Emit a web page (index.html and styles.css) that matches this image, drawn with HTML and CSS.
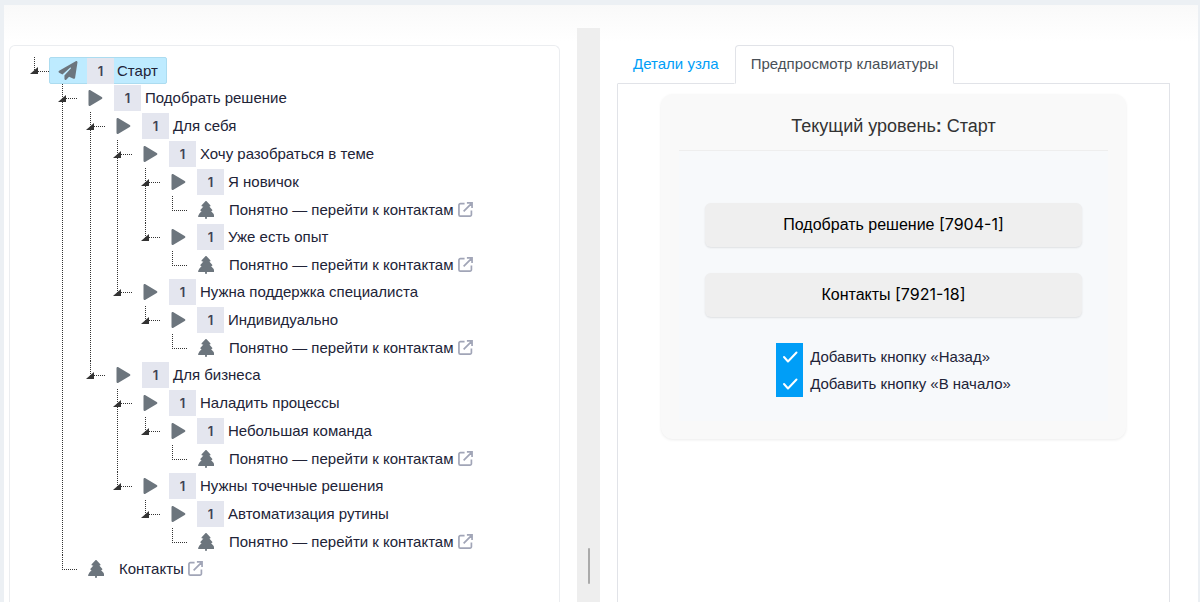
FILE: index.html
```
<!DOCTYPE html>
<html lang="ru">
<head>
<meta charset="utf-8">
<meta name="viewport" content="width=device-width, initial-scale=1">
<title>Сценарий бота</title>
<link rel="stylesheet" href="styles.css">
</head>
<body>
<svg class="sprite" aria-hidden="true">
  <symbol id="i-toggle" viewBox="0 0 8 7"><path d="M8 0v7H0z"/></symbol>
  <symbol id="i-plane" viewBox="0 0 512 512"><path d="M498.100 5.600c10.100 7 15.400 19.100 13.500 31.200l-64 416c-1.500 9.700-7.400 18.200-16 23s-18.900 5.400-28 1.600L284 427.700l-68.500 74.100c-8.900 9.700-22.900 12.900-35.200 8.100S160 493.200 160 480V396.400c0-4 1.500-7.800 4.200-10.700L331.800 202.800c5.800-6.300 5.600-16-.4-22s-15.700-6.400-22-.7L106 360.800 17.700 316.600C7.100 311.300 .3 300.700 0 288.900s5.900-22.800 16.100-28.700l448-256c10.700-6.100 23.900-5.500 34 1.400z"/></symbol>
  <symbol id="i-play" viewBox="0 0 14 16"><path d="M0 1.300C0 .3 1 -.3 1.900 .2L13.200 6.900c.9.500.9 1.700 0 2.200L1.900 15.800C1 16.300 0 15.700 0 14.700z"/></symbol>
  <symbol id="i-tree" viewBox="0 0 448 512"><path d="M207 8c9-11 25-11 34 0l106 112c13 14 4 36-15 36h-14l82 92c12 14 3 38-16 38h-18l76 86c6 7 8 14 2 22l22 24c12 14 2 34-16 34H250v30c0 18-11 30-26 30s-26-12-26-30v-30H18c-18 0-28-20-16-34l22-24c-6-8-4-15 2-22l76-86H84c-19 0-28-24-16-38l82-92h-34c-19 0-28-22-15-36z"/></symbol>
  <symbol id="i-ext" viewBox="0 0 16 16"><path d="M7 1.700H2.500a1.500 1.500 0 0 0-1.500 1.500v10.300A1.500 1.500 0 0 0 2.500 15h10.300a1.500 1.500 0 0 0 1.500-1.500V9M6 10l8-8M9.500 1H15v5.500" fill="none" stroke="currentColor" stroke-width="1.800"/></symbol>
</svg>

<main class="page">
  <section class="pane pane--tree">
    <div class="tree-card">
      <ul class="tree">
        <li class="node">
          <div class="row"><button class="toggle" aria-label="Свернуть"><svg><use href="#i-toggle"/></svg></button><a class="link link--selected" href="#"><svg class="icon icon--plane"><use href="#i-plane"/></svg><span class="badge">1</span>Старт</a></div>
          <ul class="branch">
            <li class="node">
              <div class="row"><button class="toggle" aria-label="Свернуть"><svg><use href="#i-toggle"/></svg></button><a class="link" href="#"><svg class="icon icon--play"><use href="#i-play"/></svg><span class="badge">1</span>Подобрать решение</a></div>
              <ul class="branch">
                <li class="node">
                  <div class="row"><button class="toggle" aria-label="Свернуть"><svg><use href="#i-toggle"/></svg></button><a class="link" href="#"><svg class="icon icon--play"><use href="#i-play"/></svg><span class="badge">1</span>Для себя</a></div>
                  <ul class="branch branch--tight">
                    <li class="node">
                      <div class="row"><button class="toggle" aria-label="Свернуть"><svg><use href="#i-toggle"/></svg></button><a class="link" href="#"><svg class="icon icon--play"><use href="#i-play"/></svg><span class="badge">1</span>Хочу разобраться в теме</a></div>
                      <ul class="branch">
                        <li class="node">
                          <div class="row"><button class="toggle" aria-label="Свернуть"><svg><use href="#i-toggle"/></svg></button><a class="link" href="#"><svg class="icon icon--play"><use href="#i-play"/></svg><span class="badge">1</span>Я новичок</a></div>
                          <ul class="branch branch--tight">
                            <li class="node"><div class="row row--leaf"><span class="elbow"></span><a class="link link--leaf" href="#"><svg class="icon icon--tree"><use href="#i-tree"/></svg>Понятно — перейти к контактам<svg class="ext"><use href="#i-ext"/></svg></a></div></li>
                          </ul>
                        </li>
                        <li class="node">
                          <div class="row"><button class="toggle" aria-label="Свернуть"><svg><use href="#i-toggle"/></svg></button><a class="link" href="#"><svg class="icon icon--play"><use href="#i-play"/></svg><span class="badge">1</span>Уже есть опыт</a></div>
                          <ul class="branch branch--tight">
                            <li class="node"><div class="row row--leaf"><span class="elbow"></span><a class="link link--leaf" href="#"><svg class="icon icon--tree"><use href="#i-tree"/></svg>Понятно — перейти к контактам<svg class="ext"><use href="#i-ext"/></svg></a></div></li>
                          </ul>
                        </li>
                      </ul>
                    </li>
                    <li class="node">
                      <div class="row"><button class="toggle" aria-label="Свернуть"><svg><use href="#i-toggle"/></svg></button><a class="link" href="#"><svg class="icon icon--play"><use href="#i-play"/></svg><span class="badge">1</span>Нужна поддержка специалиста</a></div>
                      <ul class="branch">
                        <li class="node">
                          <div class="row"><button class="toggle" aria-label="Свернуть"><svg><use href="#i-toggle"/></svg></button><a class="link" href="#"><svg class="icon icon--play"><use href="#i-play"/></svg><span class="badge">1</span>Индивидуально</a></div>
                          <ul class="branch branch--tight">
                            <li class="node"><div class="row row--leaf"><span class="elbow"></span><a class="link link--leaf" href="#"><svg class="icon icon--tree"><use href="#i-tree"/></svg>Понятно — перейти к контактам<svg class="ext"><use href="#i-ext"/></svg></a></div></li>
                          </ul>
                        </li>
                      </ul>
                    </li>
                  </ul>
                </li>
                <li class="node">
                  <div class="row"><button class="toggle" aria-label="Свернуть"><svg><use href="#i-toggle"/></svg></button><a class="link" href="#"><svg class="icon icon--play"><use href="#i-play"/></svg><span class="badge">1</span>Для бизнеса</a></div>
                  <ul class="branch branch--tight">
                    <li class="node">
                      <div class="row"><button class="toggle" aria-label="Свернуть"><svg><use href="#i-toggle"/></svg></button><a class="link" href="#"><svg class="icon icon--play"><use href="#i-play"/></svg><span class="badge">1</span>Наладить процессы</a></div>
                      <ul class="branch">
                        <li class="node">
                          <div class="row"><button class="toggle" aria-label="Свернуть"><svg><use href="#i-toggle"/></svg></button><a class="link" href="#"><svg class="icon icon--play"><use href="#i-play"/></svg><span class="badge">1</span>Небольшая команда</a></div>
                          <ul class="branch branch--tight">
                            <li class="node"><div class="row row--leaf"><span class="elbow"></span><a class="link link--leaf" href="#"><svg class="icon icon--tree"><use href="#i-tree"/></svg>Понятно — перейти к контактам<svg class="ext"><use href="#i-ext"/></svg></a></div></li>
                          </ul>
                        </li>
                      </ul>
                    </li>
                    <li class="node">
                      <div class="row"><button class="toggle" aria-label="Свернуть"><svg><use href="#i-toggle"/></svg></button><a class="link" href="#"><svg class="icon icon--play"><use href="#i-play"/></svg><span class="badge">1</span>Нужны точечные решения</a></div>
                      <ul class="branch">
                        <li class="node">
                          <div class="row"><button class="toggle" aria-label="Свернуть"><svg><use href="#i-toggle"/></svg></button><a class="link" href="#"><svg class="icon icon--play"><use href="#i-play"/></svg><span class="badge">1</span>Автоматизация рутины</a></div>
                          <ul class="branch branch--tight">
                            <li class="node"><div class="row row--leaf"><span class="elbow"></span><a class="link link--leaf" href="#"><svg class="icon icon--tree"><use href="#i-tree"/></svg>Понятно — перейти к контактам<svg class="ext"><use href="#i-ext"/></svg></a></div></li>
                          </ul>
                        </li>
                      </ul>
                    </li>
                  </ul>
                </li>
              </ul>
            </li>
            <li class="node"><div class="row row--leaf"><span class="elbow"></span><a class="link link--leaf" href="#"><svg class="icon icon--tree"><use href="#i-tree"/></svg>Контакты<svg class="ext"><use href="#i-ext"/></svg></a></div></li>
          </ul>
        </li>
      </ul>
    </div>
  </section>

  <div class="gutter"><span class="grip"></span></div>

  <section class="pane pane--details">
    <nav class="tabs">
      <a class="tab" href="#">Детали узла</a>
      <a class="tab tab--active" href="#">Предпросмотр клавиатуры</a>
    </nav>
    <div class="tab-body">
      <div class="preview">
        <h1 class="preview-title">Текущий уровень<b>:</b> Старт</h1>
        <div class="keys">
          <button class="key">Подобрать решение <span class="code">[7904-1]</span></button>
          <button class="key">Контакты <span class="code">[7921-18]</span></button>
        </div>
        <div class="options">
          <label class="option"><input class="check" type="checkbox" checked>Добавить кнопку «Назад»</label>
          <label class="option"><input class="check" type="checkbox" checked>Добавить кнопку «В начало»</label>
        </div>
      </div>
    </div>
  </section>
</main>
</body>
</html>
```
FILE: styles.css
```
* { box-sizing: border-box; }

body {
  margin: 0;
  padding: 5px 2px 0 4px;
  background: #ecf0f4;
  color: #212337;
  font: 15px/20px "Liberation Sans", Arial, sans-serif;
}

a { color: inherit; text-decoration: none; }
ul { margin: 0; padding: 0; list-style: none; }
button { padding: 0; border: 0; font: inherit; color: inherit; }
svg { fill: currentColor; }
.sprite { display: none; }

.page {
  display: grid;
  grid-template-columns: 23fr 23px 24fr;
  min-height: calc(100vh - 5px);
  background: linear-gradient(#f9f9f9, #fff 36px) #fff;
}
.pane { display: flex; flex-direction: column; min-width: 0; padding-top: 40px; }
.pane--tree { padding-left: 5px; padding-right: 17px; }
.pane--details { padding-left: 17px; padding-right: 28px; }

/* Tree */
.tree-card {
  flex: 1;
  padding: 11px 10px;
  border: 1px solid #ebedf0;
  border-bottom: 0;
  border-radius: 6px 6px 0 0;
  background: #fff;
}
.branch { margin-left: 28px; }
.branch--tight { margin-left: 27px; }

.node:not(:last-child) {
  background: linear-gradient(#333 1px, transparent 1px) 14px 0 / 1px 2px repeat-y;
}
.row { display: flex; height: 28px; }
.row--leaf { height: 27px; }
.tree > .node > .row { height: 27px; }
.toggle, .elbow {
  display: flex;
  flex: none;
  align-items: center;
  width: 29px;
  padding-left: 10px;
  background:
    repeating-linear-gradient(#333 0 1px, transparent 1px 2px) 14px 0 / 1px 14px no-repeat,
    repeating-linear-gradient(90deg, #333 0 1px, transparent 1px 2px) 14px 14px / 15px 1px no-repeat;
}
.toggle svg { width: 8px; height: 7px; color: #333; }

.link { display: flex; align-items: center; white-space: nowrap; padding: 0 9px 0 10px; }
.link--leaf { padding-left: 11px; }
.link--selected {
  padding: 0 8px;
  border: 1px solid #acdcf0;
  border-radius: 2px;
  background: #beebff;
}
.icon { flex: none; color: #6c757d; }
.icon--play { width: 15px; height: 16px; margin-left: 1px; margin-right: 11px; }
.icon--plane { width: 20px; height: 19px; margin-right: 9px; }
.icon--tree { width: 16px; height: 18px; margin-right: 15px; }
.badge {
  width: 27px;
  margin-right: 4px;
  background: #e4e6ef;
  color: #3f4254;
  font: 600 13px/26px Inter, sans-serif;
  text-align: center;
}
.link--selected .badge { margin-right: 3px; }
.ext { width: 15px; height: 15px; margin-left: 4px; color: #a1a5b7; }

/* Splitter */
.gutter {
  display: flex;
  align-items: flex-end;
  justify-content: center;
  margin-top: 23px;
  padding-bottom: 18px;
  background: #eee;
}
.grip { width: 2px; height: 36px; border-radius: 1px; background: #aaa; }

/* Tabs */
.tabs { display: flex; }
.tab {
  padding: 8px 15px 10px;
  border: 1px solid transparent;
  border-bottom-color: #e1e3e8;
  line-height: 19px;
  color: #009ef7;
}
.tab--active {
  border-color: #e1e3e8;
  border-bottom-color: transparent;
  border-radius: 4px 4px 0 0;
  color: #495057;
}
.tabs::after { content: ""; flex: 1; border-bottom: 1px solid #e1e3e8; }
.tab-body {
  flex: 1;
  padding: 10px 43px;
  border: solid #e1e3e8;
  border-width: 0 1px;
}

/* Keyboard preview */
.preview {
  padding: 18px;
  border-radius: 12px;
  background: #f9f9f9;
  box-shadow: 0 1px 3px rgba(0, 0, 0, .08);
}
.preview-title {
  margin: 0;
  padding-bottom: 9px;
  border-bottom: 1px solid #eee;
  color: #333;
  font-size: 18px;
  font-weight: 400;
  line-height: 29px;
  text-align: center;
}
.keys {
  display: grid;
  gap: 26px;
  padding: 52px 26px 26px;
  background: #f7f9fb;
}
.key {
  height: 44px;
  padding-bottom: 2px;
  border-radius: 6px;
  background: #efefef;
  box-shadow: 0 1px 2px rgba(0, 0, 0, .1);
  color: #000;
  font-size: 16px;
}
.code { font-family: Inter, sans-serif; }
.options {
  display: grid;
  justify-content: center;
  padding-bottom: 24px;
  background: #f7f9fb;
}
.option { display: flex; align-items: center; line-height: 26px; }
.check {
  appearance: none;
  width: 27px;
  height: 27px;
  margin: 0 7px 0 0;
  background: #009ef7;
}
.check:checked {
  background: #009ef7 url("data:image/svg+xml,%3Csvg xmlns='http://www.w3.org/2000/svg' viewBox='0 0 27 27'%3E%3Cpath d='M8 14l4 4.500 8.500-9' fill='none' stroke='white' stroke-width='2' stroke-linecap='round' stroke-linejoin='round'/%3E%3C/svg%3E") center / 27px no-repeat;
}
```
